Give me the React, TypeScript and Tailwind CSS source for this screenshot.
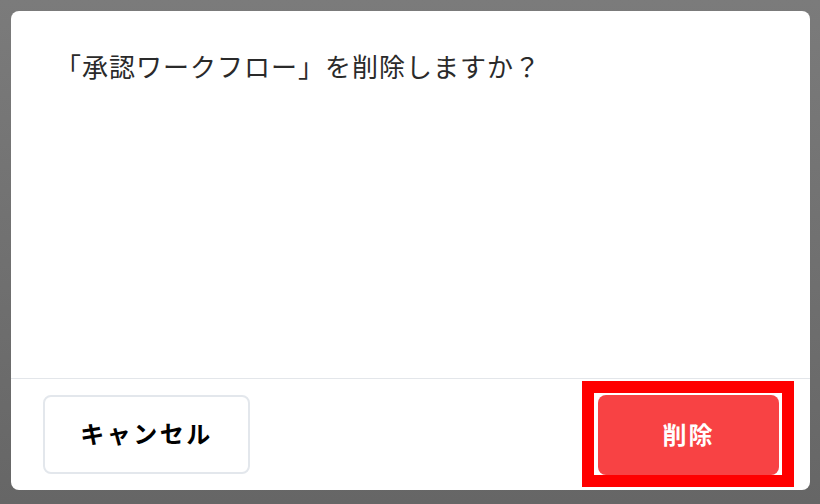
import React from "react";

export default function App() {
  const font = { fontFamily: '"Noto Sans CJK JP", "Noto Sans", sans-serif' };
  return (
    <div
      className="w-[820px] h-[504px] p-[11px] bg-gradient-to-b from-[#7b7b7b] to-[#666666]"
      style={font}
    >
      <div className="w-[799px] h-[479px] bg-white rounded-[8px] flex flex-col overflow-hidden">
        <div className="flex-1 pl-[44px] pt-[35px]">
          <p className="text-[26px] leading-[40px] tracking-[1px] text-[#2a2a2a]">
            「承認ワークフロー」を削除しますか？
          </p>
        </div>
        <div className="h-[112px] border-t border-[#e3e6ea] flex items-center justify-between pl-[32px] pr-[31px]">
          <button className="w-[207px] h-[79px] rounded-[8px] border-2 border-[#e3e7ec] bg-white text-[24px] leading-[30px] font-bold tracking-[2.5px] text-black pb-[3px]">
            キャンセル
          </button>
          <div className="relative">
            <button className="w-[181px] h-[80px] rounded-[8px] bg-[#f84244] text-white text-[24px] leading-[30px] font-bold tracking-[2px] pb-[2px]">
              削除
            </button>
            <div className="absolute left-[-16px] top-[-14px] w-[212px] h-[106px] border-[12px] border-[#ff0000] pointer-events-none" />
          </div>
        </div>
      </div>
    </div>
  );
}
